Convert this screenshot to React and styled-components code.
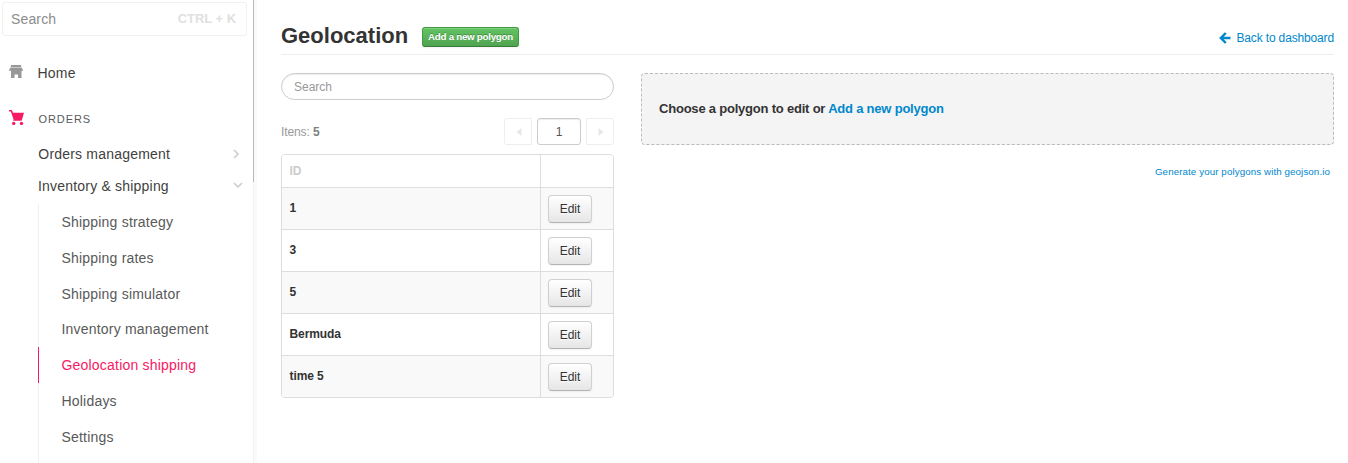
import React from "react";
import styled, { createGlobalStyle } from "styled-components";

const Global = createGlobalStyle`
  * { box-sizing: border-box; }
  html, body { margin: 0; height: 100%; overflow: hidden; background: #fff; }
  body { font-family: "Liberation Sans", Arial, sans-serif; font-size: 12px; color: #333; }
  a { color: #0088cc; text-decoration: none; }
  button, input { font-family: inherit; }
`;

const Page = styled.div`
  display: flex;
  height: 463px;
  overflow: hidden;
`;

const Sidebar = styled.nav`
  display: flex;
  flex-direction: column;
  width: 253px;
  flex: none;
  padding: 2px 6px 0 2px;
  overflow: hidden;
`;

const ScrollTrack = styled.div`
  width: 4px;
  flex: none;
  background: #fafafa;
  border-left: 1px solid #f2f2f2;
`;

const ScrollThumb = styled.div`
  width: 1px;
  height: 182px;
  margin-left: -1px;
  background: #b8b8b8;
`;

const QuickSearch = styled.div`
  display: flex;
  flex: none;
  justify-content: space-between;
  height: 34px;
  padding: 0 10px 0 8px;
  border: 1px solid #f1f1f1;
  border-radius: 3px;
  font-size: 14px;
  line-height: 33px;
  letter-spacing: 0.15px;
  color: #8c8c8c;
`;

const Shortcut = styled.b`
  font-size: 13px;
  line-height: 31px;
  letter-spacing: -0.05px;
  color: #e0e0e0;
`;

const MenuRow = styled.div`
  display: flex;
  flex: none;
  align-items: center;
  height: ${(p) => p.$height}px;
  margin-top: ${(p) => p.$top || 0}px;
  padding: 0 4px 0 ${(p) => p.$indent || 0}px;
  font-size: 14px;
  letter-spacing: 0.2px;
  color: #3f3f40;
`;

const MenuIcon = styled.svg`
  flex: none;
  width: 16px;
  height: 16px;
  margin: 0 13.5px 0 6px;
`;

const SectionName = styled.span`
  padding: 1px 0 0 1px;
  font-size: 11px;
  letter-spacing: 0.9px;
  color: #585959;
`;

const Chevron = styled.svg`
  width: 12px;
  height: 12px;
  margin-left: auto;
  margin-right: ${(p) => p.$right}px;
  fill: none;
  stroke: #cacbcc;
  stroke-width: 1.5;
`;

const SubMenu = styled.ul`
  flex: none;
  margin: 2px 0 0 36px;
  padding: 0;
  list-style: none;
`;

const SubItem = styled.li`
  height: 35.8px;
  padding-left: 22.5px;
  border-left: 1px solid ${(p) => (p.$active ? "#f71963" : "#f0f0f0")};
  font-size: 14px;
  line-height: 37.6px;
  letter-spacing: 0.2px;
  color: ${(p) => (p.$active ? "#f71963" : "#585959")};
`;

const Main = styled.main`
  flex: 1;
  padding: 19px 14px 0 24px;
`;

const Header = styled.header`
  display: flex;
  align-items: flex-start;
  height: 36px;
  border-bottom: 1px solid #eee;
`;

const Title = styled.h1`
  width: 141px;
  margin: 0;
  font-size: 22px;
  line-height: 33px;
  color: #333;
`;

const AddButton = styled.button`
  width: 97px;
  height: 20px;
  margin-top: 8px;
  padding: 0 0 1px;
  border: 1px solid #429a42;
  border-bottom-color: #367d36;
  border-radius: 3px;
  background: linear-gradient(#62c462, #51a351);
  box-shadow: inset 0 1px 0 rgba(255, 255, 255, 0.2), 0 1px 2px rgba(0, 0, 0, 0.05);
  font-size: 9.75px;
  font-weight: bold;
  line-height: 16px;
  letter-spacing: -0.27px;
  white-space: nowrap;
  color: #fff;
  text-shadow: 0 -1px 0 rgba(0, 0, 0, 0.25);
`;

const BackLink = styled.a`
  display: flex;
  align-items: center;
  gap: 5px;
  height: 38px;
  margin-left: auto;
  letter-spacing: -0.15px;
`;

const Columns = styled.div`
  display: flex;
  gap: 27px;
  margin-top: 18px;
`;

const ListColumn = styled.section`
  width: 333px;
  flex: none;
`;

const SearchInput = styled.input`
  display: block;
  width: 100%;
  height: 27px;
  padding: 0 12px;
  border: 1px solid #ccc;
  border-radius: 14px;
  box-shadow: inset 0 1px 1px rgba(0, 0, 0, 0.075);
  font-size: 12px;
  outline: none;
  &::placeholder { color: #999; opacity: 1; }
`;

const Pager = styled.div`
  display: flex;
  align-items: center;
  gap: 5px;
  height: 27px;
  margin-top: 18px;
`;

const Count = styled.span`
  margin-right: auto;
  letter-spacing: -0.1px;
  color: #999;
  b { color: #808080; }
`;

const PageButton = styled.button`
  display: flex;
  align-items: center;
  justify-content: center;
  width: 28px;
  height: 27px;
  padding: 0 0 0 1px;
  border: 1px solid #eee;
  border-radius: ${(p) => (p.$next ? "0 3px 3px 0" : "3px 0 0 3px")};
  background: #fff;
`;

const PageInput = styled.input`
  width: 44px;
  height: 27px;
  padding: 0;
  border: 1px solid #ccc;
  border-radius: 3px;
  box-shadow: inset 0 1px 1px rgba(0, 0, 0, 0.075);
  text-align: center;
  font-size: 12px;
  color: #555;
`;

const Table = styled.div`
  margin-top: 9px;
  border: 1px solid #ddd;
  border-radius: 4px;
  overflow: hidden;
`;

const TableRow = styled.div`
  display: grid;
  grid-template-columns: 258px 1fr;
  height: ${(p) => (p.$head ? 32 : 42)}px;
  border-top: ${(p) => (p.$head ? 0 : 1)}px solid #ddd;
  background: ${(p) => (p.$striped ? "#f9f9f9" : "#fff")};
`;

const NameCell = styled.div`
  padding: 0 7.5px;
  font-weight: bold;
  line-height: ${(p) => (p.$head ? 33 : 41)}px;
  letter-spacing: -0.1px;
  color: ${(p) => (p.$head ? "#ccc" : "#333")};
`;

const ActionCell = styled.div`
  padding: 7px 7px 0 7px;
  border-left: 1px solid #ddd;
`;

const EditButton = styled.button`
  display: block;
  width: 44px;
  height: 28px;
  padding: 0;
  border: 1px solid #d0d0d0;
  border-bottom-color: #b3b3b3;
  border-radius: 4px;
  background: linear-gradient(#fff, #e6e6e6);
  box-shadow: inset 0 1px 0 rgba(255, 255, 255, 0.2), 0 1px 2px rgba(0, 0, 0, 0.05);
  font-size: 12px;
  color: #333;
  text-shadow: 0 1px 1px rgba(255, 255, 255, 0.75);
`;

const EditorColumn = styled.section`
  flex: 1;
`;

const EmptyState = styled.div`
  height: 72px;
  padding-left: 17px;
  border: 1px dashed #bbb;
  border-radius: 4px;
  background: #f4f4f4;
  font-size: 13px;
  font-weight: bold;
  line-height: 69px;
  letter-spacing: -0.21px;
`;

const Hint = styled.div`
  margin-top: 20px;
  padding-right: 4px;
  text-align: right;
  font-size: 9.75px;
  line-height: 14px;
  letter-spacing: 0.1px;
`;

const submenu = [
  "Shipping strategy",
  "Shipping rates",
  "Shipping simulator",
  "Inventory management",
  "Geolocation shipping",
  "Holidays",
  "Settings",
  "",
];

const polygons = ["1", "3", "5", "Bermuda", "time 5"];

export default function App() {
  return (
    <>
      <Global />
      <Page>
        <Sidebar>
          <QuickSearch>
            Search <Shortcut>CTRL + K</Shortcut>
          </QuickSearch>
          <MenuRow $height={32} $top={21}>
            <MenuIcon viewBox="0 0 16 16" fill="#979899">
              <path d="M3.200 0h9.600l.8 2.500H2.400z" />
              <path d="M2.200 3h11.600l1.200 2v.8H1V5z" />
              <path d="M3 5h10.500v8H10V9.500H6.500V13H3z" />
            </MenuIcon>
            Home
          </MenuRow>
          <MenuRow $height={32} $top={13}>
            <MenuIcon viewBox="0 0 16 16" fill="#f71963">
              <path d="M1 0h2.900l1.100 2.800H16l-1.900 6.500-.6 1.500H5.200l.3-1.500L2.800 1.500H1z" />
              <circle cx="5.700" cy="13.400" r="1.700" />
              <circle cx="13.500" cy="13.400" r="1.700" />
            </MenuIcon>
            <SectionName>ORDERS</SectionName>
          </MenuRow>
          <MenuRow $height={32} $top={4} $indent={36.3}>
            Orders management
            <Chevron $right={1} viewBox="0 0 12 12">
              <path d="M4 2l4 4-4 4" />
            </Chevron>
          </MenuRow>
          <MenuRow $height={32} $indent={36}>
            Inventory &amp; shipping
            <Chevron $right={-1} viewBox="0 0 12 12">
              <path d="M2 3l4 4 4-4" />
            </Chevron>
          </MenuRow>
          <SubMenu>
            {submenu.map((label) => (
              <SubItem key={label} $active={label === "Geolocation shipping"}>
                {label}
              </SubItem>
            ))}
          </SubMenu>
        </Sidebar>
        <ScrollTrack>
          <ScrollThumb />
        </ScrollTrack>
        <Main>
          <Header>
            <Title>Geolocation</Title>
            <AddButton>Add a new polygon</AddButton>
            <BackLink href="#">
              <svg width="12" height="12" viewBox="0 0 12 12" fill="none" stroke="#0088cc" strokeWidth="2.500">
                <path d="M6.800 1L1.900 6l4.900 5M2 6h9.500" />
              </svg>
              Back to dashboard
            </BackLink>
          </Header>
          <Columns>
            <ListColumn>
              <SearchInput placeholder="Search" />
              <Pager>
                <Count>
                  Itens: <b>5</b>
                </Count>
                <PageButton aria-label="Previous">
                  <svg width="6" height="8" viewBox="0 0 6 8" fill="#e6e6e6">
                    <path d="M5.500 0v8L.5 4z" />
                  </svg>
                </PageButton>
                <PageInput defaultValue="1" />
                <PageButton $next aria-label="Next">
                  <svg width="6" height="8" viewBox="0 0 6 8" fill="#e6e6e6">
                    <path d="M.5 0v8l5-4z" />
                  </svg>
                </PageButton>
              </Pager>
              <Table>
                <TableRow $head>
                  <NameCell $head>ID</NameCell>
                  <ActionCell />
                </TableRow>
                {polygons.map((name, i) => (
                  <TableRow key={name} $striped={i % 2 === 0}>
                    <NameCell>{name}</NameCell>
                    <ActionCell>
                      <EditButton>Edit</EditButton>
                    </ActionCell>
                  </TableRow>
                ))}
              </Table>
            </ListColumn>
            <EditorColumn>
              <EmptyState>
                Choose a polygon to edit or <a href="#">Add a new polygon</a>
              </EmptyState>
              <Hint>
                <a href="#">Generate your polygons with geojson.io</a>
              </Hint>
            </EditorColumn>
          </Columns>
        </Main>
      </Page>
    </>
  );
}
